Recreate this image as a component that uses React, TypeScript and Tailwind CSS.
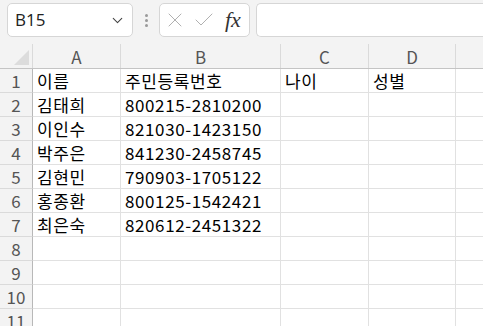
import { ChevronDown, X, Check } from 'lucide-react';

const cols = [
  { key: 'A', w: 'w-[88px]' },
  { key: 'B', w: 'w-[160px]' },
  { key: 'C', w: 'w-[88px]' },
  { key: 'D', w: 'w-[87px]' },
];

const rows: string[][] = [
  ['이름', '주민등록번호', '나이', '성별'],
  ['김태희', '800215-2810200', '', ''],
  ['이인수', '821030-1423150', '', ''],
  ['박주은', '841230-2458745', '', ''],
  ['김현민', '790903-1705122', '', ''],
  ['홍종환', '800125-1542421', '', ''],
  ['최은숙', '820612-2451322', '', ''],
  ['', '', '', ''],
  ['', '', '', ''],
  ['', '', '', ''],
  ['', '', '', ''],
];

const font = { fontFamily: '"Noto Sans CJK KR", "Noto Sans", sans-serif' };

export default function App() {
  return (
    <div className="h-[326px] w-[483px] overflow-hidden bg-white" style={font}>
      {/* formula bar */}
      <div className="flex h-[44px] items-start bg-[#f3f3f3] pt-[3px]">
        <div className="ml-[7px] flex h-[34px] w-[126px] items-center justify-between rounded-[5px] border border-[#d6d6d6] bg-white pl-[7px] pr-[6px]">
          <span className="text-[17px] text-[#222]" style={{ fontFamily: '"Open Sans", "Noto Sans", sans-serif' }}>B15</span>
          <ChevronDown size={17} strokeWidth={1.5} className="text-[#444]" />
        </div>
        <div className="flex h-[34px] w-[26px] flex-col items-center justify-center gap-[2px]">
          <span className="h-[3px] w-[3px] rounded-full bg-[#9a9a9a]" />
          <span className="h-[3px] w-[3px] rounded-full bg-[#9a9a9a]" />
          <span className="h-[3px] w-[3px] rounded-full bg-[#9a9a9a]" />
        </div>
        <div className="flex h-[34px] w-[91px] items-center rounded-[5px] border border-[#d6d6d6] bg-white pl-[3px]">
          <X size={24} strokeWidth={1} className="text-[#b0b0b0]" />
          <Check size={24} strokeWidth={1} className="ml-[5px] text-[#b0b0b0]" />
          <span className="ml-[9px] text-[22px] italic leading-none text-[#333]" style={{ fontFamily: '"Liberation Serif", serif' }}>fx</span>
        </div>
        <div className="ml-[6px] h-[34px] flex-1 rounded-l-[5px] border border-r-0 border-[#d6d6d6] bg-white" />
      </div>

      {/* column headers */}
      <div className="flex h-[25px] border-b border-[#c4c4c4] bg-[#f3f3f3]">
        <div className="relative w-[33px] shrink-0 border-r border-[#dadada]">
          <div className="absolute bottom-[3px] right-[3px] h-0 w-0 border-b-[15px] border-l-[15px] border-b-[#dcdcdc] border-l-transparent" />
        </div>
        {cols.map(c => (
          <div key={c.key} className={`${c.w} flex shrink-0 items-center justify-center border-r border-[#dadada] pt-[2px] text-[17px] text-[#555]`}>
            {c.key}
          </div>
        ))}
        <div className="flex-1" />
      </div>

      {/* grid */}
      {rows.map((r, i) => (
        <div key={i} className="flex h-[24px]">
          <div className="flex w-[33px] shrink-0 items-center justify-center border-r border-b border-r-[#b8b8b8] border-b-[#dadada] bg-[#f3f3f3] text-[17px] text-[#555]">
            {i + 1}
          </div>
          {cols.map((c, j) => (
            <div key={c.key} className={`${c.w} flex shrink-0 items-center overflow-hidden whitespace-nowrap border-r border-b border-[#e1e1e1] pl-[4px] text-[17px] tracking-[0.6px] text-black`}>
              {r[j]}
            </div>
          ))}
          <div className="flex-1 border-b border-[#e1e1e1]" />
        </div>
      ))}
    </div>
  );
}
